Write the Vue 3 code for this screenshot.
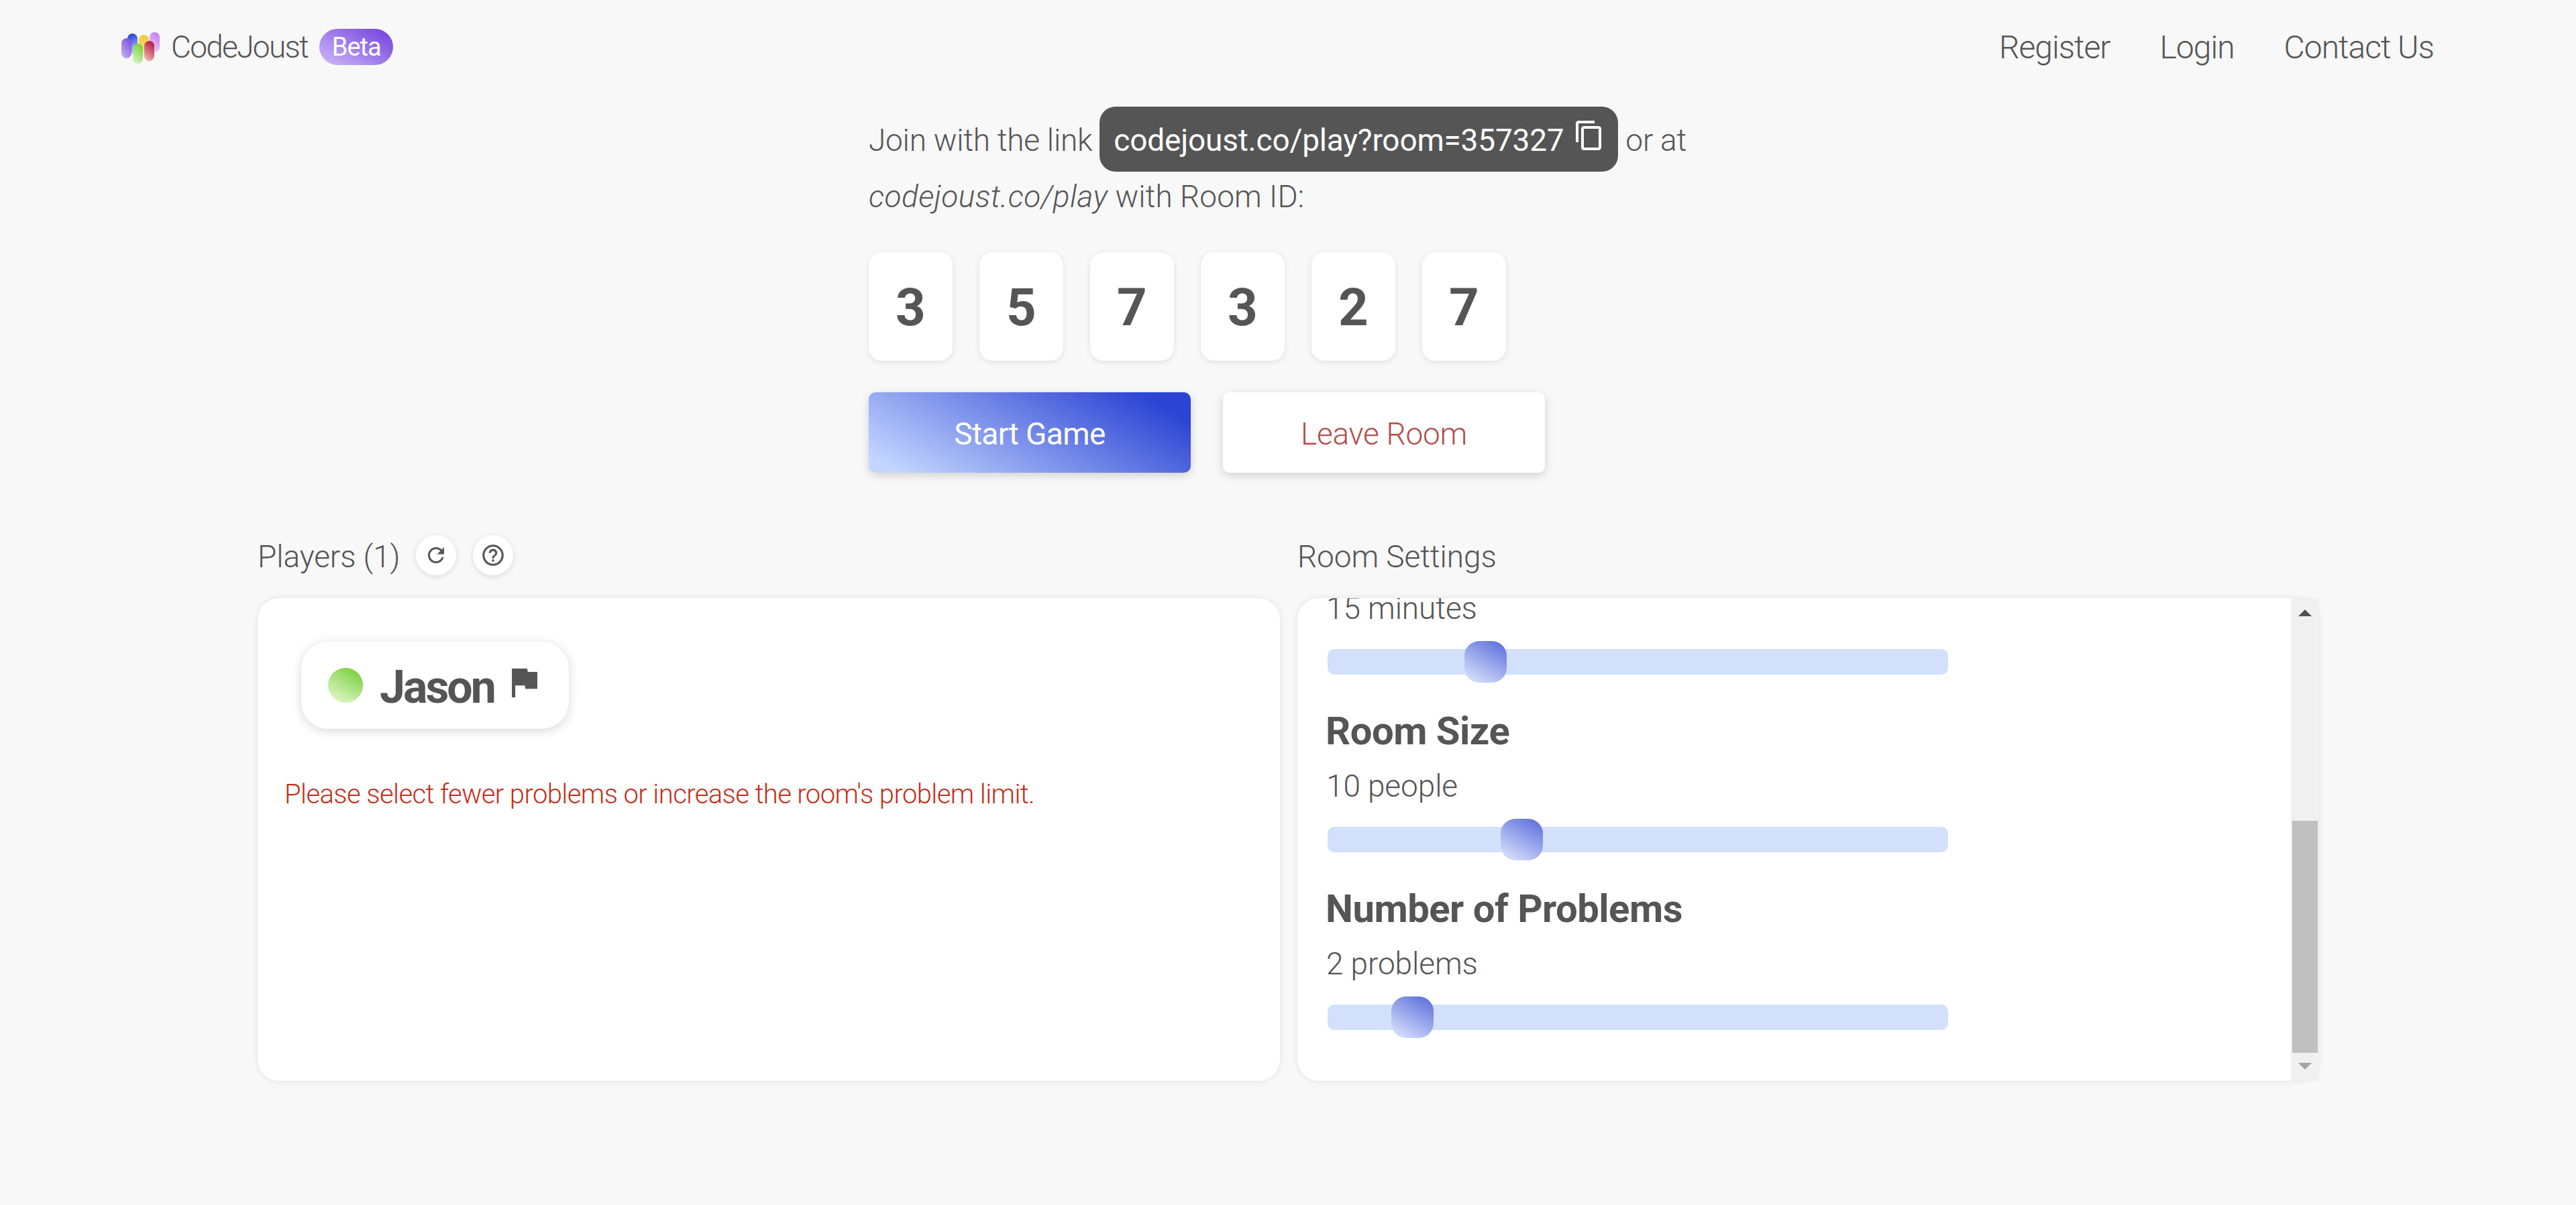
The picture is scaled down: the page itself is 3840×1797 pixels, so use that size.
<script setup>
const digits = ['3', '5', '7', '3', '2', '7']
const navLinks = ['Register', 'Login', 'Contact Us']
const settings = [
  { title: '', value: '15 minutes', pos: 204 },
  { title: 'Room Size', value: '10 people', pos: 258 },
  { title: 'Number of Problems', value: '2 problems', pos: 95 },
]
</script>

<template>
  <div class="page">
    <header class="nav">
      <div class="brand">
        <svg class="logo" viewBox="0 0 60 50" width="60" height="50">
          <defs>
            <linearGradient id="gp" x1="0.8" y1="0" x2="0.2" y2="1"><stop offset="0" stop-color="#7c4fe0"/><stop offset="1" stop-color="#c4aef5"/></linearGradient>
            <linearGradient id="gb" x1="0.5" y1="0" x2="0.7" y2="1"><stop offset="0" stop-color="#2c45d6"/><stop offset="1" stop-color="#bcd0fb"/></linearGradient>
            <linearGradient id="gy" x1="0.5" y1="0" x2="0.5" y2="1"><stop offset="0" stop-color="#f5c92f"/><stop offset="1" stop-color="#fbe9a3"/></linearGradient>
            <linearGradient id="gm" x1="0.7" y1="0" x2="0.3" y2="1"><stop offset="0" stop-color="#c77df0"/><stop offset="1" stop-color="#ecd0fb"/></linearGradient>
            <linearGradient id="gr" x1="0.7" y1="0" x2="0.3" y2="1"><stop offset="0" stop-color="#b5163f"/><stop offset="1" stop-color="#eeb7b4"/></linearGradient>
            <linearGradient id="gg" x1="0.7" y1="0" x2="0.3" y2="1"><stop offset="0" stop-color="#74d23c"/><stop offset="1" stop-color="#d3f5bd"/></linearGradient>
          </defs>
          <rect x="43" y="3" width="15" height="30" rx="7.5" fill="url(#gm)"/>
          <rect x="27" y="7" width="15" height="31" rx="7.5" fill="url(#gy)"/>
          <rect x="35" y="16" width="15" height="30" rx="7.5" fill="url(#gr)"/>
          <rect x="10" y="5" width="15" height="30" rx="7.5" fill="url(#gb)"/>
          <rect x="1" y="12" width="15" height="30" rx="7.5" fill="url(#gp)"/>
          <rect x="18" y="20" width="15" height="30" rx="7.5" fill="url(#gg)"/>
        </svg>
        <span class="brand-name">CodeJoust</span>
        <span class="beta">Beta</span>
      </div>
      <nav class="links">
        <a v-for="l in navLinks" :key="l">{{ l }}</a>
      </nav>
    </header>

    <main>
      <section class="join">
        <div class="join-line">
          <span class="t-join">Join with the link</span>
          <span class="link-pill">
            <span class="t-link">codejoust.co/play?room=357327</span>
            <svg class="copy" viewBox="0 0 24 24" width="48" height="48"><path fill="#fff" d="M16 1H4c-1.1 0-2 .9-2 2v14h2V3h12V1zm3 4H8c-1.1 0-2 .9-2 2v14c0 1.1.9 2 2 2h11c1.1 0 2-.9 2-2V7c0-1.1-.9-2-2-2zm0 16H8V7h11v14z"/></svg>
          </span>
          <span class="t-join">or at</span>
        </div>
        <div class="join-line2"><em>codejoust.co/play</em><span> with Room ID:</span></div>
        <div class="digits">
          <div v-for="(d, i) in digits" :key="i" class="digit">{{ d }}</div>
        </div>
        <div class="actions">
          <button class="btn start">Start Game</button>
          <button class="btn leave">Leave Room</button>
        </div>
      </section>

      <section class="columns">
        <div class="col">
          <div class="col-head">
            <span class="t-head">Players (1)</span>
            <span class="round">
              <svg viewBox="0 0 24 24" width="36" height="36"><path fill="#555" d="M17.65 6.35C16.2 4.9 14.21 4 12 4c-4.42 0-7.99 3.58-7.99 8s3.57 8 7.99 8c3.73 0 6.84-2.55 7.73-6h-2.08c-.82 2.33-3.04 4-5.65 4-3.31 0-6-2.69-6-6s2.69-6 6-6c1.66 0 3.14.69 4.22 1.78L13 11h7V4l-2.35 2.35z"/></svg>
            </span>
            <span class="round second">
              <svg viewBox="0 0 24 24" width="38" height="38"><path fill="#555" d="M11 18h2v-2h-2v2zm1-16C6.48 2 2 6.48 2 12s4.48 10 10 10 10-4.48 10-10S17.52 2 12 2zm0 18c-4.41 0-8-3.59-8-8s3.59-8 8-8 8 3.59 8 8-3.59 8-8 8zm0-14c-2.21 0-4 1.79-4 4h2c0-1.1.9-2 2-2s2 .9 2 2c0 2-3 1.75-3 5h2c0-2.25 3-2.5 3-5 0-2.21-1.79-4-4-4z"/></svg>
            </span>
          </div>
          <div class="panel players">
            <div class="player">
              <span class="dot"></span>
              <span class="player-name">Jason</span>
              <svg class="flag" viewBox="5 4 15 17" width="38" height="43"><path fill="#555" d="M14.4 6L14 4H5v17h2v-7h5.6l.4 2h7V6z"/></svg>
            </div>
            <p class="error">Please select fewer problems or increase the room's problem limit.</p>
          </div>
        </div>

        <div class="col">
          <div class="col-head"><span class="t-head">Room Settings</span></div>
          <div class="panel settings">
            <div class="viewport">
              <div class="scroll-content">
                <div v-for="s in settings" :key="s.value" class="setting">
                  <h3 v-if="s.title">{{ s.title }}</h3>
                  <div class="value">{{ s.value }}</div>
                  <div class="track">
                    <span class="thumb" :style="{ left: s.pos + 'px' }"></span>
                  </div>
                </div>
              </div>
            </div>
            <div class="scrollbar">
              <span class="arrow up"></span>
              <span class="bar"></span>
              <span class="arrow down"></span>
            </div>
          </div>
        </div>
      </section>
    </main>
  </div>
</template>

<style>
body { background: #f8f8f8; }
</style>

<style scoped>
.page {
  min-height: 1797px;
  background: #f8f8f8;
  color: #555;
  font-family: "Roboto", "Noto Sans", sans-serif;
  font-weight: 300;
  font-size: 46px;
  letter-spacing: -0.2px;
  overflow: hidden;
}
.nav {
  height: 140px;
  box-sizing: border-box;
  padding: 0 212px 0 180px;
  display: flex;
  align-items: center;
  justify-content: space-between;
}
.brand { display: flex; align-items: center; }
.logo { overflow: visible; }
.brand-name { margin-left: 15px; font-size: 46px; letter-spacing: -1.7px; }
.beta {
  margin-left: 17px;
  width: 110px;
  height: 54px;
  border-radius: 27px;
  display: flex;
  align-items: center;
  justify-content: center;
  color: #fff;
  font-size: 38px;
  font-weight: 400;
  letter-spacing: -1px;
  background: linear-gradient(30deg, #c9b4f8 6%, #7a4bdf 89%);
}
.links { display: flex; gap: 74px; font-size: 48px; letter-spacing: -1px; }
.join { width: 1250px; margin: 19px auto 0; }
.join-line { display: flex; align-items: center; height: 97px; gap: 11px; white-space: nowrap; }
.t-join { letter-spacing: -0.25px; padding-top: 3px; }
.link-pill {
  height: 97px;
  width: 773px;
  box-sizing: border-box;
  padding: 0 19px 0 21px;
  display: flex;
  align-items: center;
  justify-content: space-between;
  background: #555;
  color: #fff;
  border-radius: 24px;
}
.t-link { font-weight: 400; letter-spacing: -0.2px; padding-top: 3px; }
.copy { margin-top: -11px; }
.join-line2 { height: 74px; display: flex; align-items: center; white-space: pre; }
.join-line2 em { letter-spacing: 0.45px; }
.join-line2 span { letter-spacing: 0.05px; }
.digits { display: flex; gap: 40px; margin-top: 46px; }
.digit {
  width: 125px;
  height: 160px;
  padding-top: 2px;
  background: #fff;
  border-radius: 20px;
  box-shadow: 0 2px 10px rgba(0, 0, 0, 0.1);
  display: flex;
  align-items: center;
  justify-content: center;
  font-size: 78px;
  font-weight: 700;
  letter-spacing: 0;
}
.actions { display: flex; gap: 48px; margin-top: 47px; }
.btn {
  width: 480px;
  height: 120px;
  padding: 4px 0 0;
  border: 0;
  border-radius: 10px;
  font: inherit;
  letter-spacing: -0.3px;
  box-shadow: 0 4px 14px rgba(0, 0, 0, 0.16);
}
.start {
  color: #fff;
  font-weight: 400;
  letter-spacing: -0.6px;
  background: linear-gradient(30deg, #c4d6ff 6%, #2c44d4 89%);
}
.leave { color: #b24e4e; background: #fff; }
.columns {
  display: grid;
  grid-template-columns: 1524px 1523px;
  gap: 26px;
  margin: 93px 0 0 384px;
}
.col-head { height: 60px; display: flex; align-items: center; }
.t-head { letter-spacing: -0.1px; padding-top: 4px; }
.round {
  width: 60px;
  height: 60px;
  border-radius: 50%;
  background: #fff;
  margin-left: 24px;
  display: flex;
  align-items: center;
  justify-content: center;
  box-shadow: 0 2px 10px rgba(0, 0, 0, 0.12);
}
.second { margin-left: 25px; }
.panel {
  height: 720px;
  margin-top: 34px;
  background: #fff;
  border-radius: 32px;
  box-shadow: 0 0 10px rgba(0, 0, 0, 0.1);
}
.players { padding: 65px 40px 0; box-sizing: border-box; }
.player {
  width: 399px;
  height: 130px;
  margin-left: 25px;
  box-sizing: border-box;
  padding-left: 40px;
  background: #fff;
  border-radius: 40px;
  box-shadow: 0 3px 16px rgba(0, 0, 0, 0.16);
  display: flex;
  align-items: center;
}
.dot {
  width: 52px;
  height: 52px;
  border-radius: 50%;
  background: linear-gradient(30deg, #e4f9d0 6%, #7dd040 89%);
}
.player-name { margin-left: 25px; padding-top: 6px; font-size: 68px; font-weight: 700; line-height: 1; letter-spacing: -3px; }
.flag { margin: -8px 0 0 26px; }
.error { margin: 72px 0 0; color: #c2301a; font-size: 40px; line-height: 52px; letter-spacing: -0.6px; }
.settings { display: flex; position: relative; }
.viewport {
  flex: 1;
  overflow: hidden;
  border-radius: 32px 0 0 32px;
}
.scroll-content { padding-left: 43px; margin-top: -13px; }
h3 { margin: 47px 0 0 -1px; font-size: 58px; font-weight: 700; line-height: 74px; letter-spacing: -0.5px; }
.value { line-height: 56px; margin-top: 17px; letter-spacing: -0.1px; }
.setting:first-child .value { margin-top: 0; }
.track {
  position: relative;
  width: 925px;
  height: 38px;
  margin: 33px 0 0 2px;
  border-radius: 10px;
  background: #d3e0fb;
}
.thumb {
  position: absolute;
  top: -12px;
  width: 63px;
  height: 62px;
  border-radius: 22px;
  background: linear-gradient(30deg, #d8e2fb 6%, #6577de 89%);
}
.scrollbar {
  width: 42px;
  background: #f0f0f0;
  position: relative;
}
.bar {
  position: absolute;
  left: 2px;
  right: 2px;
  top: 332px;
  height: 346px;
  background: #c0c0c0;
}
.arrow {
  position: absolute;
  left: 11px;
  width: 0;
  height: 0;
  border-left: 10px solid transparent;
  border-right: 10px solid transparent;
}
.up { top: 17px; border-bottom: 10px solid #505050; }
.down { top: 693px; border-top: 10px solid #a3a3a3; }
</style>
